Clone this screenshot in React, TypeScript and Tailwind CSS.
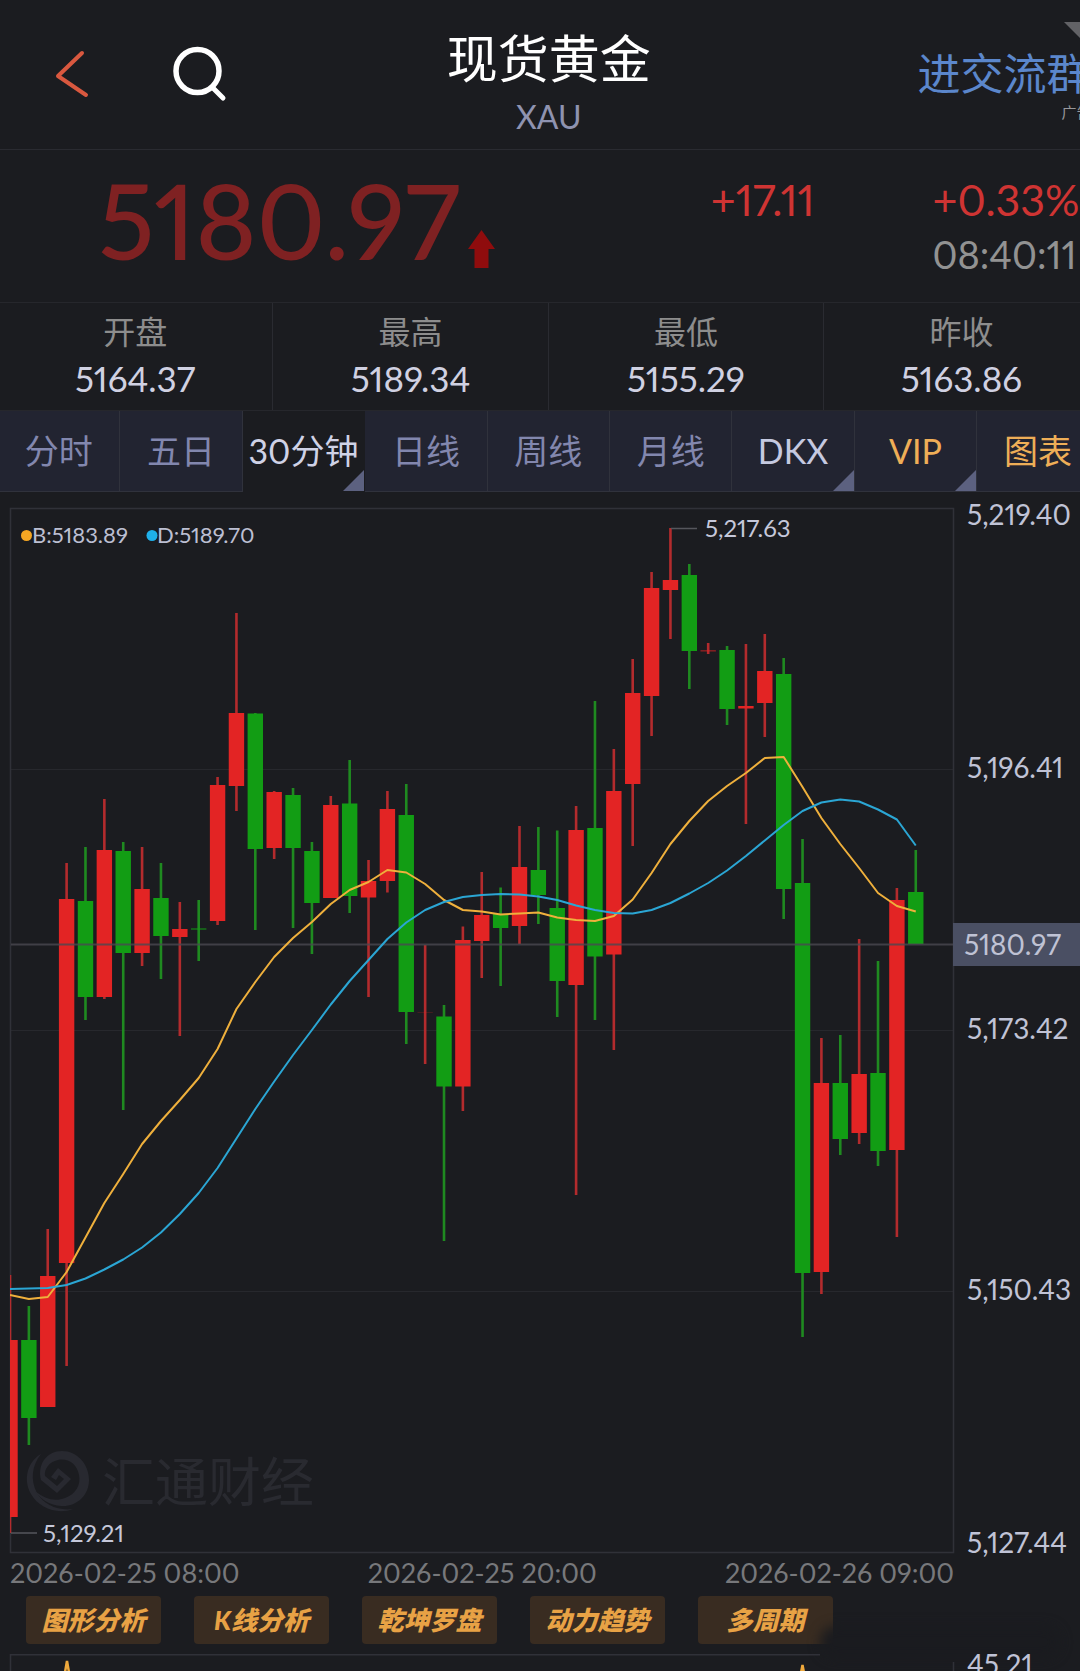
import { useState } from 'react';
import clsx from 'clsx';

type Candle = {
  up: boolean;
  high: number;
  top: number;
  bottom: number;
  low: number;
};

// [direction, high, body top, body bottom, low] in chart units
const rawCandles: [string, number, number, number, number][] = [
  ['r', 1275, 1340, 1517, 1533],
  ['g', 1306, 1340, 1418, 1445],
  ['r', 1229, 1276, 1407, 1407],
  ['r', 863, 899, 1263, 1366],
  ['g', 847, 901, 997, 1020],
  ['r', 799, 850, 997, 999],
  ['g', 842, 851, 953, 1110],
  ['r', 847, 889, 953, 966],
  ['g', 863, 898, 936, 979],
  ['r', 902, 929, 937, 1036],
  ['g', 900, 928.5, 929.5, 961],
  ['r', 777, 785, 921, 925],
  ['r', 613, 713, 786, 811],
  ['g', 713, 713.5, 849, 930],
  ['r', 791, 792, 848, 859],
  ['g', 788, 795, 848, 928],
  ['g', 842, 851, 903, 954],
  ['r', 796, 805, 898, 898],
  ['g', 760, 803.5, 896, 913],
  ['r', 860, 881, 897.5, 997],
  ['r', 791, 809, 881, 892.5],
  ['g', 784, 815, 1012, 1044],
  ['r', 945, 1012, 1012.2, 1064],
  ['g', 1005, 1016.5, 1086.5, 1241],
  ['r', 926.5, 940, 1086.5, 1111],
  ['r', 872, 915, 941, 978],
  ['g', 887.5, 914, 928, 986],
  ['r', 826, 867, 926, 944],
  ['g', 827, 870, 895, 924],
  ['g', 830.5, 908, 981, 1017],
  ['r', 806, 830, 985, 1195],
  ['g', 701, 828, 956.5, 1020],
  ['r', 749, 791, 954.5, 1050],
  ['r', 659, 693, 784, 846],
  ['r', 572, 588, 696, 736],
  ['r', 528, 580, 590, 639],
  ['g', 564, 575, 651, 689],
  ['r', 643, 650.5, 651.3, 654],
  ['g', 646, 650, 709, 725],
  ['r', 644, 706, 708.5, 824],
  ['r', 634, 671, 703, 737],
  ['g', 658, 674, 889, 919],
  ['g', 839, 883, 1273, 1337],
  ['r', 1038, 1083, 1272, 1294],
  ['g', 1035, 1083, 1139, 1155],
  ['r', 939, 1074, 1133, 1144],
  ['g', 961, 1073, 1151, 1166],
  ['r', 888, 900, 1150, 1237],
  ['g', 850, 892, 944, 944],
];

const candles: Candle[] = rawCandles.map(([dir, high, top, bottom, low]) => ({
  up: dir === 'r',
  high,
  top,
  bottom,
  low,
}));

const fastLine = [
  1295, 1299, 1297, 1272, 1237.5, 1203, 1174, 1144, 1121, 1100, 1078, 1049, 1009, 982, 957, 938,
  922, 904, 890, 882, 870, 872.5, 884, 900, 910, 911.5, 914.5, 913.5, 912.5, 917.5, 920, 921, 916,
  899.5, 873, 844, 821, 801, 786, 773, 758, 757, 787, 818, 844, 868, 893, 906, 911.5,
];

const slowLine = [
  1289, 1288.5, 1288, 1285, 1278.5, 1269.5, 1259.5, 1247.5, 1232.5, 1214, 1193, 1168, 1138.5, 1109,
  1081.5, 1055, 1030, 1004.5, 981, 960, 939, 922.5, 910, 902, 897, 895, 894, 894.5, 896.5, 900,
  905.5, 910, 913, 913.5, 910, 903, 893.5, 883, 870.5, 856, 840.5, 825, 811, 802.5, 799.5, 801.5,
  809.5, 819.5, 845.5,
];

const STEP = 18.87;
const xAt = (i: number) => 10 + i * STEP;
const toPoints = (values: number[]) => values.map((y, i) => `${xAt(i)},${y}`).join(' ');

const stats = [
  { label: '开盘', value: '5164.37' },
  { label: '最高', value: '5189.34' },
  { label: '最低', value: '5155.29' },
  { label: '昨收', value: '5163.86' },
];

const tabs = [
  { label: '分时', color: 'text-[#8287ae]' },
  { label: '五日', color: 'text-[#8287ae]' },
  { label: '30分钟', color: 'text-[#8287ae]', more: true },
  { label: '日线', color: 'text-[#8287ae]' },
  { label: '周线', color: 'text-[#8287ae]' },
  { label: '月线', color: 'text-[#8287ae]' },
  { label: 'DKX', color: 'text-[#c5c9e0]', more: true },
  { label: 'VIP', color: 'text-[#eeae57]', more: true },
  { label: '图表', color: 'text-[#eeae57]' },
];

const axisLabels = [
  { text: '5,219.40', y: 525 },
  { text: '5,196.41', y: 778 },
  { text: '5,173.42', y: 1039 },
  { text: '5,150.43', y: 1300 },
  { text: '5,127.44', y: 1553 },
];

const tools = ['图形分析', 'K线分析', '乾坤罗盘', '动力趋势', '多周期'];

function Header() {
  return (
    <header className="grid h-[150px] grid-cols-[1fr_auto_1fr] border-b border-[#2a2b31]">
      <div className="flex items-start gap-[78px] pt-11 pl-[54px]">
        <button type="button" aria-label="返回">
          <svg className="h-14 w-10" viewBox="0 0 40 56" fill="none" stroke="#d9583f" strokeWidth="4" strokeLinecap="round" strokeLinejoin="round">
            <path d="M30 9 6 32l28 19" />
          </svg>
        </button>
        <button type="button" aria-label="搜索">
          <svg className="h-[60px] w-[60px]" viewBox="0 0 60 60" fill="none" stroke="#fff" strokeLinecap="round">
            <circle cx="27.5" cy="27" r="21.5" strokeWidth="5.5" />
            <path d="m43 44 10 10" strokeWidth="5" />
          </svg>
        </button>
      </div>
      <div className="flex flex-col items-center pt-8">
        <h1 className="text-[51px] leading-[54px] text-white">现货黄金</h1>
        <span className="mt-3 text-[32px] leading-[38px] text-[#8f93b0]">XAU</span>
      </div>
      <div className="relative flex flex-col items-end pt-[50px]">
        <svg className="absolute top-[22px] right-0 h-9 w-9" viewBox="0 0 36 36">
          <path d="M0 0h36v36z" fill="#626266" />
        </svg>
        <a href="#group" className="mr-2.5 text-[43px] leading-[48px] text-[#5b87cc]">
          进交流群
        </a>
        <span className="mt-1 mr-2 text-[15px] leading-5 text-[#97979b]">广告</span>
      </div>
    </header>
  );
}

function Quote() {
  return (
    <section className="flex h-[152px] items-start">
      <div className="flex items-end pl-[100px]">
        <strong className="text-[104px] leading-[140px] font-medium text-[#7f2122]">5180.97</strong>
        <svg className="mb-[22px] ml-2 h-[38px] w-[27px]" viewBox="0 0 27 38">
          <path d="M13.5 0 27 19h-6.500v19h-14V19H0z" fill="#8f0c0d" />
        </svg>
      </div>
      <div className="ml-auto flex gap-[118px] pt-[26px] pr-5">
        <span className="text-[43px] leading-[48px] text-[#cf3433]">+17.11</span>
        <div className="flex flex-col items-start">
          <span className="text-[43px] leading-[48px] text-[#cf3433]">+0.33%</span>
          <time className="mt-1.5 text-[38px] leading-[48px] text-[#929292]">08:40:11</time>
        </div>
      </div>
    </section>
  );
}

function Stats() {
  return (
    <dl className="grid h-[109px] grid-cols-4 border-y border-[#26272c]">
      {stats.map((item) => (
        <div key={item.label} className="flex flex-col items-center border-r border-[#2a2b31] pt-2">
          <dt className="text-[32px] leading-[42px] text-[#8d8d8d]">{item.label}</dt>
          <dd className="mt-1 text-[35px] leading-[42px] text-[#d0d1e2]">{item.value}</dd>
        </div>
      ))}
    </dl>
  );
}

function PeriodTabs() {
  const [active, setActive] = useState('30分钟');

  return (
    <nav className="grid h-[81px] grid-cols-9 bg-[#222431]">
      {tabs.map((tab) => (
        <button
          key={tab.label}
          type="button"
          onClick={() => setActive(tab.label)}
          className={clsx(
            'relative border-r border-b border-[#30323c] text-[34px] leading-none whitespace-nowrap',
            tab.label === active ? 'border-transparent bg-[#1b1c20] text-[#cfd2e6]' : tab.color,
          )}
        >
          {tab.label}
          {tab.more && (
            <svg className="absolute right-0 bottom-0 h-[21px] w-[21px]" viewBox="0 0 21 21">
              <path d="M21 0v21H0z" fill="#5c6180" />
            </svg>
          )}
        </button>
      ))}
    </nav>
  );
}

function Watermark() {
  return (
    <g>
      <g fill="#282930">
        <path d="M41 1454C27 1462 23 1480 31 1494c8 14 26 21 42 15-15 2-29-4-36-16-7-13-5-28 4-39z" />
        <path d="M41 1480c-4-16 6-29 21-29 15 0 27 13 27 29s-13 27-28 26c-11-1-20-6-26-15 10 8 20 11 30 7 11-4 16-13 14-23-2-11-11-17-21-15-9 2-14 9-13 16l12 10 7-7-5-4-3 5-5-3 7-9 13 11-14 14z" />
      </g>
      <text x="102" y="1502" fontSize="53" fill="#292a30">
        汇通财经
      </text>
    </g>
  );
}

function CandleChart() {
  return (
    <svg className="block h-auto w-full overflow-visible" viewBox="0 492 1080 1062" role="img" aria-label="现货黄金 30分钟K线">
      <defs>
        <clipPath id="plot">
          <rect x="10" y="508" width="944" height="1045" />
        </clipPath>
      </defs>
      <Watermark />
      <g stroke="#27282d" strokeWidth="1">
        <path d="M11 769.5H953M11 1030.500H953M11 1291.500H953" />
      </g>
      <rect x="10.500" y="508.500" width="943" height="1044" fill="none" stroke="#303138" strokeWidth="1.500" />

      <g clipPath="url(#plot)">
        {candles.map((c, i) => (
          <g key={i}>
            <rect x={xAt(i) - 1.3} y={c.high} width="2.600" height={c.low - c.high} fill={c.up ? '#b32b2d' : '#1f8a20'} />
            <rect x={xAt(i) - 7.7} y={c.top} width="15.400" height={c.bottom - c.top} fill={c.up ? '#e32424' : '#129d14'} />
          </g>
        ))}
        <path d="M11 944.500H953" stroke="#4a4950" strokeOpacity="0.8" strokeWidth="2" />
        <polyline points={toPoints(fastLine)} fill="none" stroke="#efb03c" strokeWidth="2" strokeLinejoin="round" />
        <polyline points={toPoints(slowLine)} fill="none" stroke="#2ba6d4" strokeWidth="2" strokeLinejoin="round" />
      </g>

      <path d="M671 528.500H697M11 1533H37" stroke="#55565c" strokeWidth="1.500" />
      <circle cx="26.500" cy="535.500" r="5.500" fill="#f5a623" />
      <circle cx="152" cy="535.500" r="5.500" fill="#1fb0ea" />
      <g fill="#bcbfd2" fontSize="22">
        <text x="32" y="543">B:5183.89</text>
        <text x="157" y="543">D:5189.70</text>
      </g>
      <g fill="#c5c8da" fontSize="24">
        <text x="705" y="537">5,217.63</text>
        <text x="43" y="1542">5,129.21</text>
      </g>

      <g fill="#c0c3d6" fontSize="28">
        {axisLabels.map((label) => (
          <text key={label.text} x="967" y={label.y}>
            {label.text}
          </text>
        ))}
      </g>
      <rect x="953" y="923" width="127" height="43" fill="#4a4f63" />
      <text x="964" y="955" fontSize="28" fill="#bfc2d4">
        5180.97
      </text>
    </svg>
  );
}

function TimeAxis() {
  return (
    <div className="mr-[126px] ml-[10px] flex justify-between pt-0.5 text-[27px] leading-[34px] text-[#77787b]">
      <time>2026-02-25 08:00</time>
      <time>2026-02-25 20:00</time>
      <time>2026-02-26 09:00</time>
    </div>
  );
}

function ToolBar() {
  return (
    <div className="flex gap-[33px] pt-1.5 pl-[26px]">
      {tools.map((tool) => (
        <button
          key={tool}
          type="button"
          className="h-12 w-[135px] rounded bg-[#392c21] text-[26px] leading-none font-black whitespace-nowrap text-[#e8a245] italic"
        >
          {tool}
        </button>
      ))}
    </div>
  );
}

function SubChart() {
  return (
    <div className="relative mt-[10px]">
      <div className="absolute -top-7 left-[820px] h-8 w-60 rounded-full bg-[#1a1b1f] blur-[6px]" />
      <svg className="relative block h-auto w-full" viewBox="0 0 1080 260">
        <path d="M820 .8H10.500V260M953.500 8v252" fill="none" stroke="#303138" strokeWidth="1.500" />
        <path d="M64 24 67 7l3 17M800 24l2.500-13 2.500 13" fill="none" stroke="#efa93c" strokeWidth="2.500" />
        <text x="967" y="21" fontSize="28" fill="#c0c3d6">
          45.21
        </text>
      </svg>
    </div>
  );
}

export default function App() {
  return (
    <main className="h-screen overflow-hidden bg-[#1b1c20] font-['Lato','Noto_Sans_CJK_SC',sans-serif] proportional-nums">
      <div className="-ml-0.5 w-[102%]">
        <Header />
        <Quote />
        <Stats />
        <PeriodTabs />
      </div>
      <CandleChart />
      <TimeAxis />
      <ToolBar />
      <SubChart />
    </main>
  );
}
